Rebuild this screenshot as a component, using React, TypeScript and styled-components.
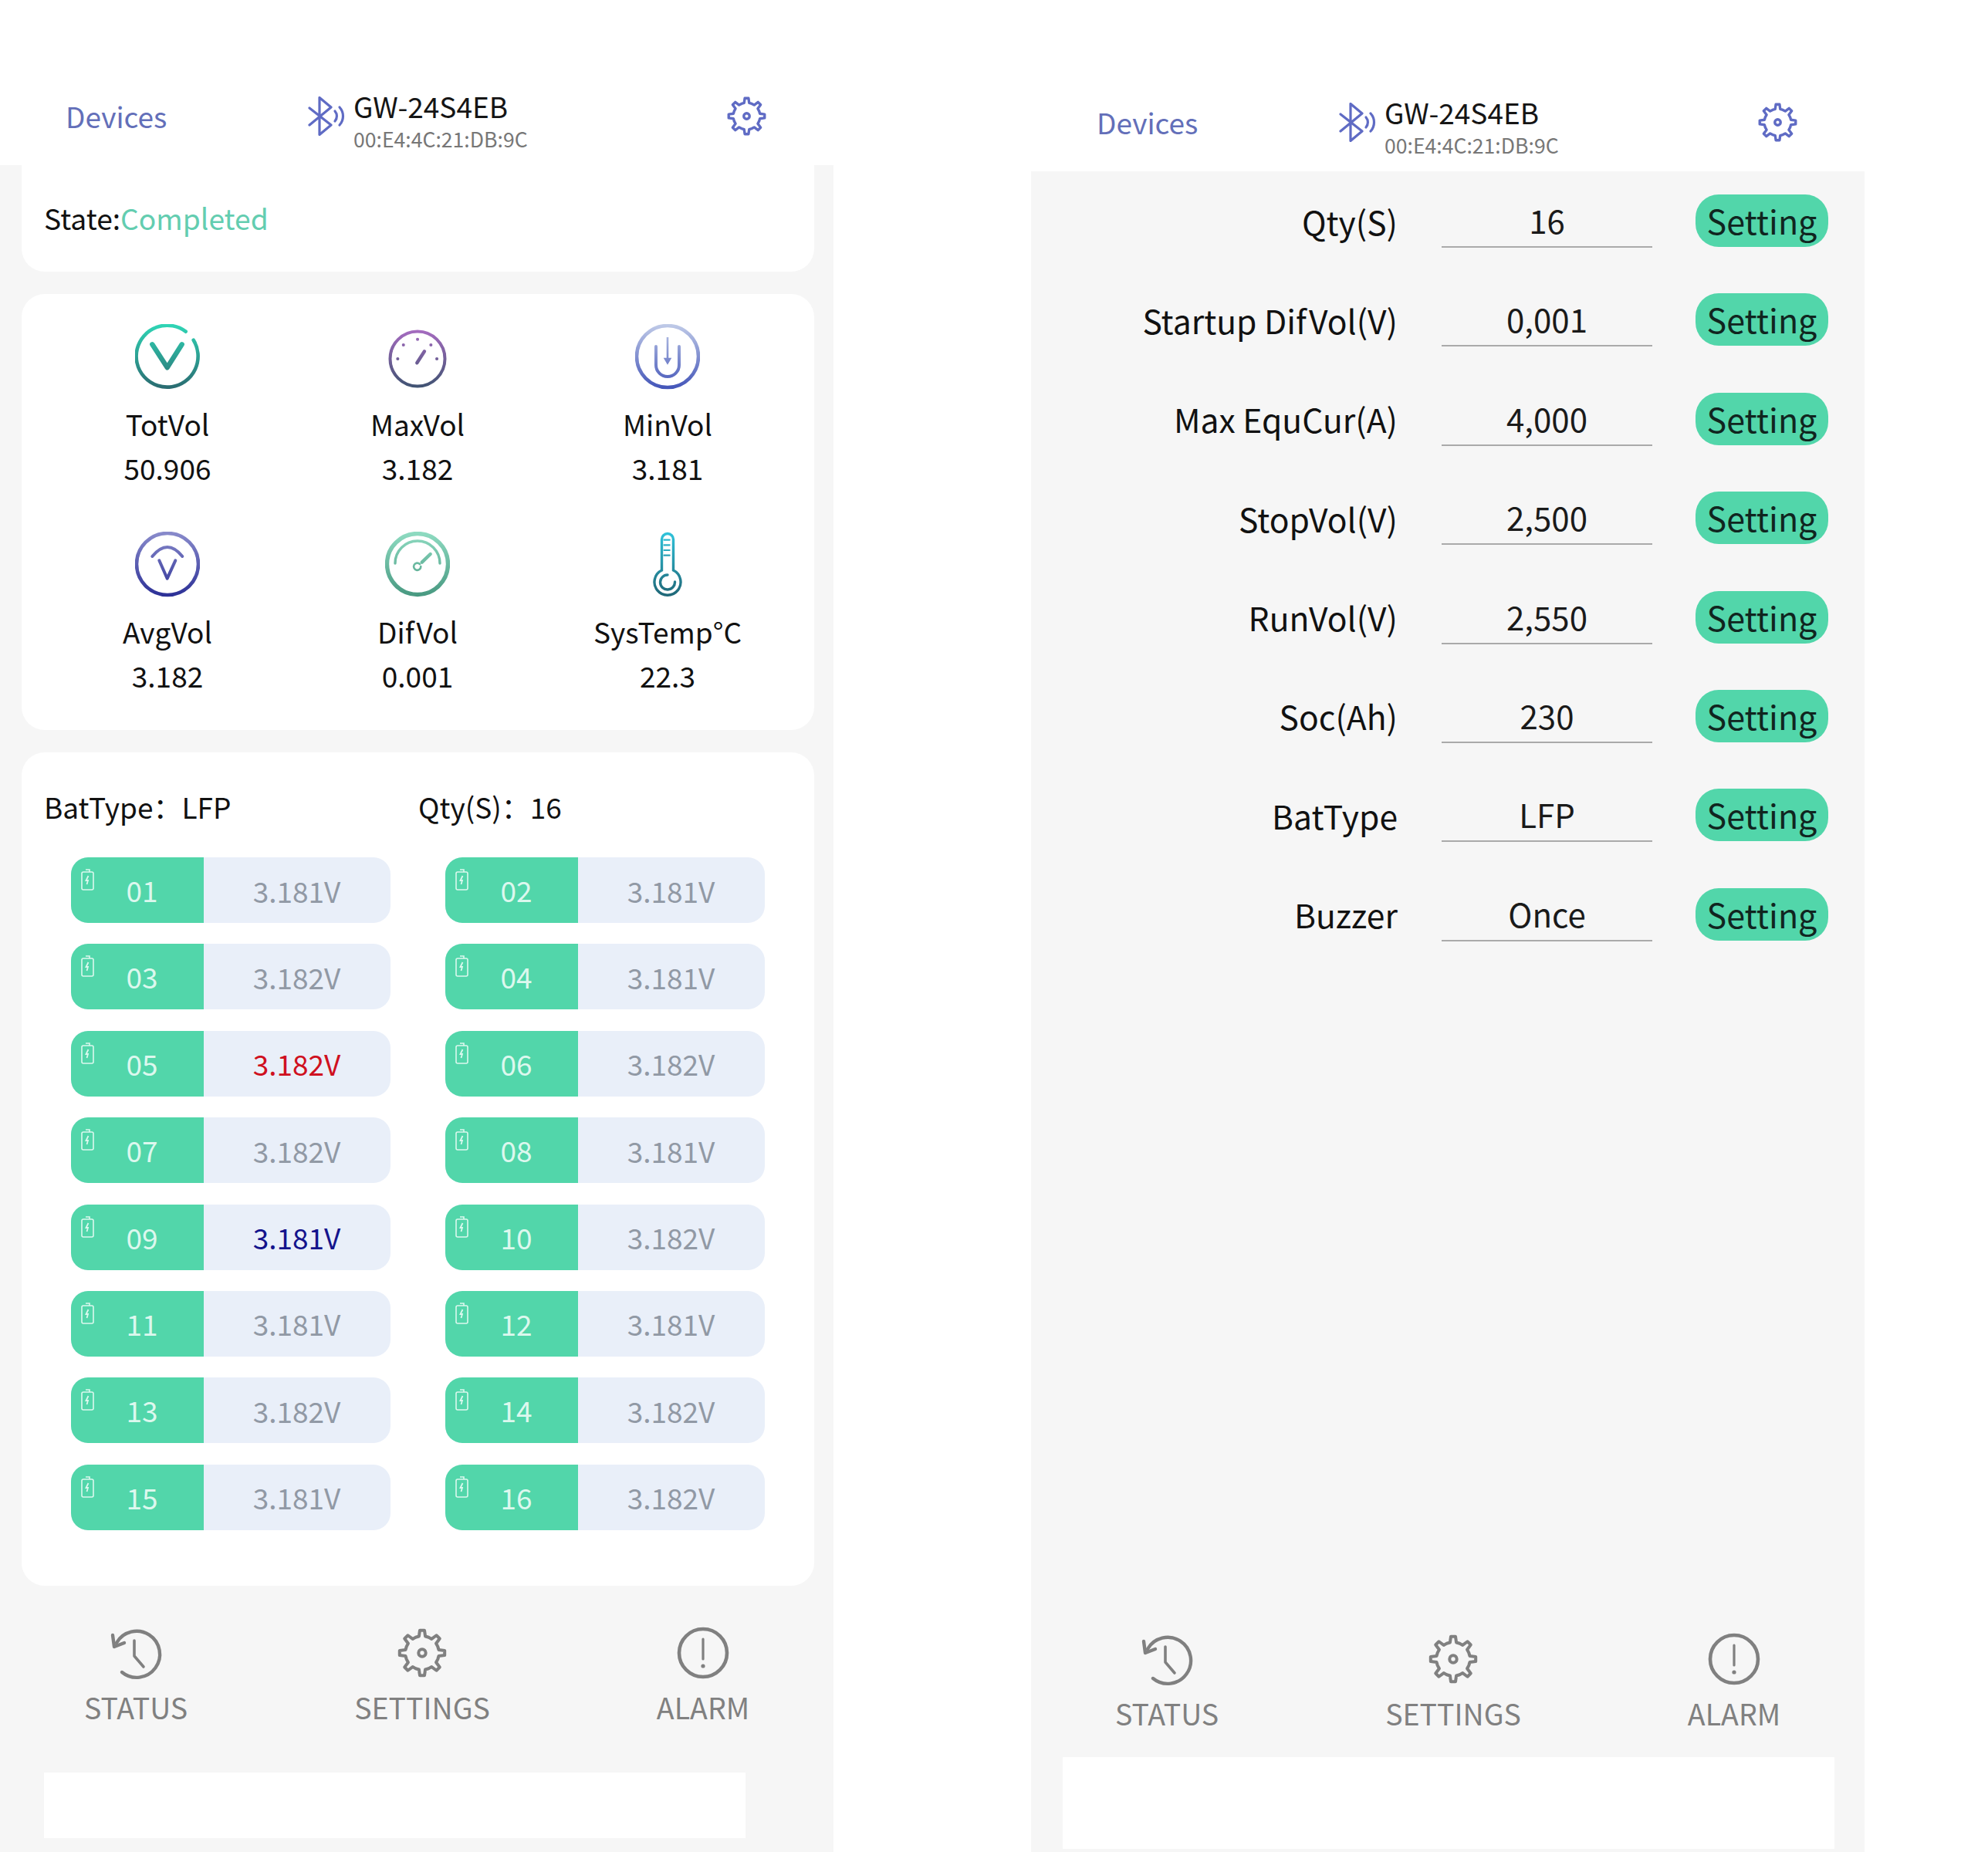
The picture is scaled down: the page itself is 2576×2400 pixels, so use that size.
import React from 'react'
import styled, { createGlobalStyle } from 'styled-components'

const GlobalStyle = createGlobalStyle`
  html, body {
    margin: 0;
    padding: 0;
    background: #ffffff;
  }
  body {
    font-family: "Noto Sans CJK SC", "Noto Sans", sans-serif;
    color: #111111;
  }
`

const Page = styled.div`
  width: 2576px;
  height: 2400px;
  display: flex;
  gap: 256px;
  overflow: hidden;
`

const Phone = styled.div`
  width: 1080px;
  height: 2400px;
  display: flex;
  flex-direction: column;
  background: #f6f6f6;
`

const Header = styled.header<{ $height: number }>`
  height: ${p => p.$height}px;
  padding: ${p => p.$height - 89}px 87px 0 85px;
  box-sizing: border-box;
  background: #ffffff;
  display: flex;
  align-items: flex-start;
  flex-shrink: 0;
`

const DevicesLink = styled.div`
  width: 314px;
  font-size: 37px;
  line-height: 56px;
  margin-top: -3px;
  color: #636fb9;
`

const DeviceBlock = styled.div`
  flex: 1;
  display: flex;
  align-items: flex-start;
  gap: 11px;
`

const DeviceName = styled.div`
  font-size: 37px;
  line-height: 50px;
  margin-top: -13px;
  color: #151515;
`

const DeviceMac = styled.div`
  font-size: 26.6px;
  line-height: 38px;
  margin-top: -1px;
  color: #777777;
`

const Card = styled.section`
  margin: 0 25px 29px 28px;
  background: #ffffff;
  border-radius: 30px;
`

const StateCard = styled(Card)`
  border-radius: 0 0 30px 30px;
  padding: 38px 29px 40px;
  margin-bottom: 29px;
  font-size: 37.2px;
  line-height: 60px;
`

const StateValue = styled.span`
  color: #63cdb0;
`

const StatsGrid = styled(Card)`
  display: grid;
  grid-template-columns: repeat(3, 324px);
  row-gap: 54px;
  padding: 39px 0 42px 27px;
`

const Stat = styled.div`
  display: flex;
  flex-direction: column;
  align-items: center;
  font-size: 37px;
  line-height: 57px;
`

const StatIcon = styled.svg`
  width: 84px;
  height: 88px;
  margin-bottom: 13px;
`

const BatteryCard = styled(Card)`
  margin-bottom: 0;
  padding: 40px 0 72px;
`

const BatteryInfo = styled.div`
  display: grid;
  grid-template-columns: 485px auto;
  padding-left: 29px;
  font-size: 37px;
  line-height: 60px;
  margin-bottom: 36px;
`

const CellGrid = styled.div`
  display: grid;
  grid-template-columns: repeat(2, 414px);
  column-gap: 71px;
  row-gap: 27.4px;
  padding-left: 64px;
`

const Cell = styled.div`
  height: 85px;
  display: flex;
  border-radius: 22px;
  overflow: hidden;
  background: #e9eff9;
  font-size: 37px;
`

const CellIndex = styled.div`
  width: 172px;
  box-sizing: border-box;
  padding: 15px 18px 0 13px;
  background: #52d6aa;
  color: #dcf8ee;
  display: flex;
  align-items: flex-start;
`

const CellNumber = styled.span`
  flex: 1;
  text-align: center;
  line-height: 55px;
`

const CellVoltage = styled.div<{ $tone?: 'high' | 'low' }>`
  flex: 1;
  display: flex;
  align-items: center;
  justify-content: center;
  padding-right: 1px;
  color: ${p => (p.$tone === 'high' ? '#cf1020' : p.$tone === 'low' ? '#14148c' : '#9199a5')};
`

const SettingsList = styled.div`
  display: flex;
  flex-direction: column;
  gap: 60.4px;
  padding-top: 29px;
`

const SettingRow = styled.div`
  display: grid;
  grid-template-columns: 475px 273px 171px;
  column-gap: 57px;
  height: 68px;
  align-items: center;
  font-size: 42.6px;
`

const SettingLabel = styled.div`
  text-align: right;
`

const SettingValue = styled.div`
  height: 68px;
  line-height: 68px;
  text-align: center;
  border-bottom: 2px solid #aaaaaa;
  font-size: 42px;
  color: #1a1a1a;
`

const SettingButton = styled.div`
  height: 68px;
  line-height: 66px;
  margin-left: -1px;
  border-radius: 30px;
  background: #52d6aa;
  text-align: center;
  font-size: 43px;
  color: #10251f;
`

const Nav = styled.nav`
  margin-top: auto;
  display: grid;
  grid-template-columns: 352px 390px 338px;
`

const NavItem = styled.div`
  display: flex;
  flex-direction: column;
  align-items: center;
  font-size: 37.5px;
  line-height: 56px;
  color: #808080;
`

const NavIcon = styled.svg`
  width: 80px;
  height: 80px;
  margin-bottom: 2px;
`

const NavGearBox = styled.div`
  width: 80px;
  height: 80px;
  margin-bottom: 2px;
  display: flex;
  align-items: center;
  justify-content: center;
`

const AdStrip = styled.div<{ $height: number; $left: number; $width: number; $top: number; $bottom: number }>`
  height: ${p => p.$height}px;
  width: ${p => p.$width}px;
  margin: ${p => p.$top}px 0 ${p => p.$bottom}px ${p => p.$left}px;
  background: #ffffff;
  flex-shrink: 0;
`

// 8 tooth outline, same shape in the header and the tab bar
function gearPath(cx: number, cy: number, outer: number, inner: number) {
  const pts: string[] = []
  const n = 8
  for (let i = 0; i < n; i++) {
    const a = (i * Math.PI * 2) / n - Math.PI / 2
    const step = (Math.PI * 2) / n
    const at = (r: number, t: number) =>
      `${(cx + r * Math.cos(a + t)).toFixed(2)} ${(cy + r * Math.sin(a + t)).toFixed(2)}`
    pts.push(at(inner, -step * 0.5))
    pts.push(at(inner, -step * 0.24))
    pts.push(at(outer, -step * 0.13))
    pts.push(at(outer, step * 0.13))
    pts.push(at(inner, step * 0.24))
  }
  return 'M' + pts.join('L') + 'Z'
}

const Gear: React.FC<{ color: string; size: number; stroke: number }> = ({ color, size, stroke }) => (
  <svg width={size} height={size} viewBox="0 0 60 60" fill="none" stroke={color} strokeWidth={stroke} strokeLinejoin="round">
    <path d={gearPath(30, 30, 27.5, 20.5)} />
    <circle cx="30" cy="30" r="4.4" />
  </svg>
)

const Bluetooth: React.FC = () => (
  <svg width="48" height="51" viewBox="0 0 48 51" fill="none" stroke="#5f6bc4" strokeWidth="3.2" strokeLinecap="round" strokeLinejoin="round" style={{ flexShrink: 0 }}>
    <path d="M2 15 L30 37 L15 49.5 V1.5 L30 14 L2 37" />
    <path d="M35 19 a10 10 0 0 1 0 13" />
    <path d="M41 14 a17 17 0 0 1 0 23" />
  </svg>
)

const BatteryGlyph: React.FC = () => (
  <svg width="17" height="28" viewBox="0 0 17 28" fill="none" stroke="#dcf8ee" strokeWidth="1.6" style={{ flexShrink: 0 }}>
    <rect x="1" y="4" width="15" height="23" rx="2" />
    <path d="M6 1 H11 V4" />
    <path d="M9.5 9 L6.5 15 H9 L7.5 20" strokeWidth="1.8" />
  </svg>
)

const HistoryIcon: React.FC = () => (
  <NavIcon viewBox="0 0 80 80" fill="none" stroke="#808080" strokeWidth="4.4" strokeLinecap="round" strokeLinejoin="round">
    <path d="M15 27 A30 30 0 1 1 22 65" />
    <path d="M10 17 L12 32 L25 27" />
    <path d="M38 24 V44 L50 58" strokeWidth="3.6" />
  </NavIcon>
)

const AlarmIcon: React.FC = () => (
  <NavIcon viewBox="0 0 80 80" fill="none" stroke="#808080" strokeWidth="4.6" strokeLinecap="round">
    <circle cx="40" cy="40" r="31" />
    <path d="M40 22 V48" strokeWidth="3.2" />
    <circle cx="40" cy="57" r="2.6" fill="#808080" stroke="none" />
  </NavIcon>
)

const Grad: React.FC<{ id: string; from: string; to: string }> = ({ id, from, to }) => (
  <defs>
    <linearGradient id={id} x1="0" y1="0" x2="0" y2="84" gradientUnits="userSpaceOnUse">
      <stop offset="0" stopColor={from} />
      <stop offset="1" stopColor={to} />
    </linearGradient>
  </defs>
)

const statIcons: Record<string, React.ReactNode> = {
  TotVol: (
    <>
      <Grad id="gTot" from="#2fd6b6" to="#2a6a70" />
      <g fill="none" stroke="url(#gTot)" strokeLinecap="round" strokeLinejoin="round">
        <path d="M75.7 20.7 A40 40 0 1 1 65.7 9.7" strokeWidth="4.6" />
        <path d="M22.3 26.3 L41.7 56.3 L60.7 26.3" strokeWidth="6.4" />
      </g>
    </>
  ),
  MaxVol: (
    <>
      <Grad id="gMax" from="#b06ec8" to="#3d5270" />
      <g fill="none" stroke="url(#gMax)" strokeLinecap="round">
        <circle cx="42" cy="45" r="35.5" strokeWidth="4" />
        <path d="M41.3 50.3 L51 35.3" strokeWidth="4.4" />
        <path d="M16.3 45 h.1 M23.7 27 h.1 M42 19.7 h.1 M59.3 27 h.1 M67 45 h.1" strokeWidth="4" />
      </g>
    </>
  ),
  MinVol: (
    <>
      <Grad id="gMin" from="#c0cbe8" to="#4254b8" />
      <g fill="none" stroke="url(#gMin)">
        <circle cx="42" cy="42" r="40" strokeWidth="4.6" />
        <path d="M27 29 V53 a15 15 0 0 0 30 0 V29" strokeWidth="4" strokeLinecap="round" />
        <path d="M42 17 V45" strokeWidth="2.6" />
        <path d="M36.7 43.7 H47.3 L42 52.7 Z" fill="url(#gMin)" stroke="none" />
      </g>
    </>
  ),
  AvgVol: (
    <>
      <Grad id="gAvg" from="#8a8ccc" to="#2b2f96" />
      <g fill="none" stroke="url(#gAvg)" strokeLinecap="round" strokeLinejoin="round">
        <circle cx="42" cy="42" r="40" strokeWidth="4.6" />
        <path d="M22.3 32 Q42 8 61.3 32" strokeWidth="4" />
        <path d="M31.3 37.3 L41.7 60.7 L52.3 37.3" strokeWidth="4" />
      </g>
    </>
  ),
  DifVol: (
    <>
      <Grad id="gDif" from="#8fdcc2" to="#479880" />
      <g fill="none" stroke="url(#gDif)" strokeLinecap="round">
        <circle cx="42" cy="42" r="39.5" strokeWidth="5.4" />
        <path d="M13 41 A29 29 0 0 1 71 41" strokeWidth="3.4" />
        <path d="M47.7 39.7 L58.7 29" strokeWidth="4.4" />
        <path d="M45 42 A4.6 4.6 0 1 0 46.3 45" strokeWidth="2.6" />
      </g>
    </>
  ),
  'SysTemp°C': (
    <>
      <Grad id="gTmp" from="#2fc4dc" to="#1f6676" />
      <g fill="none" stroke="url(#gTmp)" strokeLinecap="round">
        <path d="M34.5 50 V10 a7.5 7.5 0 0 1 15 0 V50 a17 17 0 1 1 -15 0 Z" strokeWidth="3.4" />
        <path d="M37.5 10.7 H44.7 M37.5 17.3 H44.7 M37.5 24 H44.7 M37.5 30.7 H44.7" strokeWidth="2.2" />
        <path d="M42 56 A9.5 9.5 0 1 0 51.5 65" strokeWidth="3.4" />
      </g>
    </>
  ),
}

const stats = [
  { label: 'TotVol', value: '50.906' },
  { label: 'MaxVol', value: '3.182' },
  { label: 'MinVol', value: '3.181' },
  { label: 'AvgVol', value: '3.182' },
  { label: 'DifVol', value: '0.001' },
  { label: 'SysTemp°C', value: '22.3' },
]

const voltages = [
  '3.181', '3.181', '3.182', '3.181', '3.182', '3.182', '3.182', '3.181',
  '3.181', '3.182', '3.181', '3.181', '3.182', '3.182', '3.181', '3.182',
]

const settings = [
  { label: 'Qty(S)', value: '16' },
  { label: 'Startup DifVol(V)', value: '0,001' },
  { label: 'Max EquCur(A)', value: '4,000' },
  { label: 'StopVol(V)', value: '2,500' },
  { label: 'RunVol(V)', value: '2,550' },
  { label: 'Soc(Ah)', value: '230' },
  { label: 'BatType', value: 'LFP' },
  { label: 'Buzzer', value: 'Once' },
]

const TopBar: React.FC<{ height: number }> = ({ height }) => (
  <Header $height={height}>
    <DevicesLink>Devices</DevicesLink>
    <DeviceBlock>
      <Bluetooth />
      <div>
        <DeviceName>GW-24S4EB</DeviceName>
        <DeviceMac>00:E4:4C:21:DB:9C</DeviceMac>
      </div>
    </DeviceBlock>
    <Gear color="#5f6bc4" size={51} stroke={4} />
  </Header>
)

const BottomNav: React.FC = () => (
  <Nav>
    <NavItem>
      <HistoryIcon />
      STATUS
    </NavItem>
    <NavItem>
      <NavGearBox>
        <Gear color="#808080" size={64} stroke={3.8} />
      </NavGearBox>
      SETTINGS
    </NavItem>
    <NavItem>
      <AlarmIcon />
      ALARM
    </NavItem>
  </Nav>
)

const App: React.FC = () => {
  return (
    <>
      <GlobalStyle />
      <Page>
        <Phone>
          <TopBar height={214} />
          <StateCard>
            State:<StateValue>Completed</StateValue>
          </StateCard>
          <StatsGrid>
            {stats.map(s => (
              <Stat key={s.label}>
                <StatIcon viewBox="0 0 84 88">{statIcons[s.label]}</StatIcon>
                <div>{s.label}</div>
                <div>{s.value}</div>
              </Stat>
            ))}
          </StatsGrid>
          <BatteryCard>
            <BatteryInfo>
              <span>BatType：LFP</span>
              <span>Qty(S)：16</span>
            </BatteryInfo>
            <CellGrid>
              {voltages.map((v, i) => (
                <Cell key={i}>
                  <CellIndex>
                    <BatteryGlyph />
                    <CellNumber>{String(i + 1).padStart(2, '0')}</CellNumber>
                  </CellIndex>
                  <CellVoltage $tone={i === 4 ? 'high' : i === 8 ? 'low' : undefined}>{v}V</CellVoltage>
                </Cell>
              ))}
            </CellGrid>
          </BatteryCard>
          <BottomNav />
          <AdStrip $height={85} $width={909} $left={57} $top={57} $bottom={18} />
        </Phone>
        <Phone>
          <TopBar height={222} />
          <SettingsList>
            {settings.map(s => (
              <SettingRow key={s.label}>
                <SettingLabel>{s.label}</SettingLabel>
                <SettingValue>{s.value}</SettingValue>
                <SettingButton>Setting</SettingButton>
              </SettingRow>
            ))}
          </SettingsList>
          <BottomNav />
          <AdStrip $height={119} $width={1000} $left={41} $top={29} $bottom={4} />
        </Phone>
      </Page>
    </>
  )
}

export default App
